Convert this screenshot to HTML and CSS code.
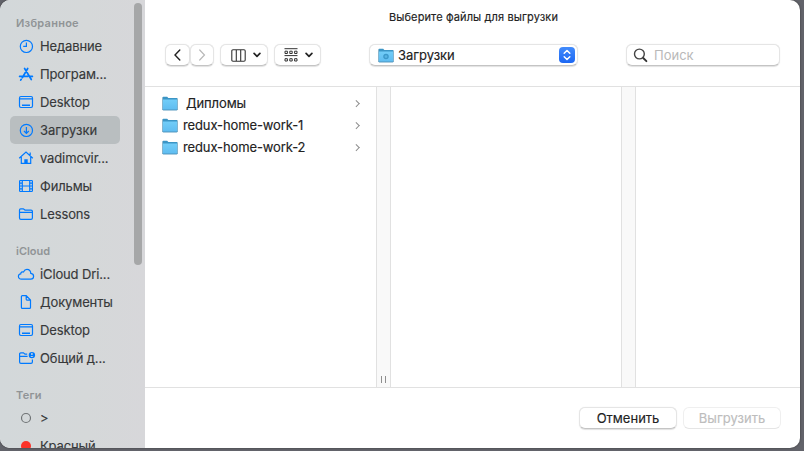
FILE: index.html
```html
<!DOCTYPE html>
<html lang="ru">
<head>
<meta charset="utf-8">
<title>Выберите файлы для выгрузки</title>
<link rel="stylesheet" href="styles.css">
</head>
<body>
<svg class="defs" width="0" height="0">
  <defs>
    <linearGradient id="folder-fill" x1="0" y1="0" x2="0" y2="1"><stop offset="0" stop-color="#72cdf8"/><stop offset="1" stop-color="#5fbcf0"/></linearGradient>
    <symbol id="folder" viewBox="0 0 16 15">
      <path d="M.5 13V1.6Q.5.8 1.3.8h3.9l1.1 1.1h8.4q.8 0 .8.8V13z" fill="#3b95c5"/>
      <path d="M.5 3.6h15v9.6q0 .8-.8.8H1.3q-.8 0-.8-.8z" fill="url(#folder-fill)"/>
      <path d="M.5 13.1q0 .9.8.9h13.4q.8 0 .8-.9" fill="none" stroke="#4a90b8" stroke-width=".9"/>
      <path d="M.4 1.5v12M15.6 2.5v11" stroke="#86aabd" stroke-width=".7"/>
    </symbol>
    <symbol id="desktop" viewBox="0 0 16 16">
      <rect x="1.5" y="2.5" width="13" height="11" rx="1.4"/><path d="M2 4.9h12"/><path d="M4 11.2h8" stroke-width="1.6"/>
    </symbol>
    <symbol id="chev" viewBox="0 0 8 6"><path d="M1.1 1.4 4 4.3l2.9-2.9" fill="none" stroke="#222" stroke-width="1.7" stroke-linecap="round" stroke-linejoin="round"/></symbol>
  </defs>
</svg>
<div class="window">
  <aside class="sidebar">
    <h2>Избранное</h2>
    <ul>
      <li><svg viewBox="0 0 16 16"><circle cx="8.4" cy="8.4" r="6.1"/><path d="M8.4 4.4v4H5.2"/></svg><span>Недавние</span></li>
      <li><svg viewBox="0 0 16 16"><path d="M9.7 2.5 4.3 11.7M6.6 2.5l6.7 11M1.6 10.4h8M12.2 10.4h2.2M3.2 13.4l-.5.6" stroke-width="1.7" stroke-linecap="round"/></svg><span>Програм...</span></li>
      <li><svg><use href="#desktop"/></svg><span>Desktop</span></li>
      <li class="selected"><svg viewBox="0 0 16 16"><circle cx="8.4" cy="8.4" r="6.1"/><path d="M8.4 4.9v6.4M6 9l2.4 2.4L10.8 9"/></svg><span>Загрузки</span></li>
      <li><svg viewBox="0 0 16 16"><path d="M1.2 8.2 8 2l6.8 6.2M3.3 7v6.4h9.4V7M12.2 5V2.6"/><path d="M6.3 13.5V9.2h3.4v4.3z" fill="#007aff" stroke="none"/></svg><span>vadimcvir...</span></li>
      <li><svg viewBox="0 0 16 16"><rect x="1.6" y="2.5" width="12.8" height="11" rx=".8"/><path d="M4.3 2.5v11M11.7 2.5v11M4.3 8h7.4M1.6 5.2h2.7M1.6 8h2.7M1.6 10.8h2.7M11.7 5.2h2.7M11.7 8h2.7M11.7 10.8h2.7"/></svg><span>Фильмы</span></li>
      <li><svg viewBox="0 0 16 16"><path d="M1.5 12V4q0-1.2 1.2-1.2h2.6L7 4.1h6q1.4 0 1.4 1.2V12q0 1.4-1.4 1.4H2.9Q1.5 13.4 1.5 12zM1.6 6.4h12.7"/></svg><span>Lessons</span></li>
    </ul>
    <h2 class="latin">iCloud</h2>
    <ul>
      <li><svg viewBox="0 0 16 16"><path d="M3.4 13.2C1.6 13.2.4 12 .4 10.5c0-1.4 1-2.5 2.3-2.6 0-1.6 1.5-2.5 2.8-1.9.7-1.6 1.8-2.7 3.4-2.7 2.3 0 3.8 1.8 3.9 4.1 1.6.2 2.8 1.4 2.8 2.9 0 1.7-1.2 2.9-2.9 2.9z"/></svg><span>iCloud Dri...</span></li>
      <li><svg viewBox="0 0 16 16"><path d="M3.4 2.6q0-1 1-1h3.8l4.3 4.5v7.3q0 1-1 1H4.4q-1 0-1-1zM8.2 1.6v3.7q0 .8.8.8h3.5"/></svg><span>Документы</span></li>
      <li><svg><use href="#desktop"/></svg><span>Desktop</span></li>
      <li><svg viewBox="0 0 16 16"><path d="M9.2 4.1H7L5.4 2.8H2.8Q1.6 2.8 1.6 4v8q0 1.4 1.3 1.4H13q1.4 0 1.4-1.4V9.5M1.6 6.4h8"/><circle cx="13.9" cy="5.1" r="3.2" fill="#007aff" stroke="none"/><circle cx="13.9" cy="4" r=".9" fill="#d4d8da" stroke="none"/><path d="M12.4 6.9q1.5-1.9 3 0z" fill="#d4d8da" stroke="none"/></svg><span>Общий д...</span></li>
    </ul>
    <h2>Теги</h2>
    <ul>
      <li><svg viewBox="0 0 16 16"><circle class="tag-empty" cx="8" cy="8" r="4.5"/></svg><span>&gt;</span></li>
      <li><svg viewBox="0 0 16 16"><circle class="tag-red" cx="8" cy="8" r="5"/></svg><span>Красный</span></li>
    </ul>
    <div class="scrollbar"></div>
  </aside>
  <main>
    <h1>Выберите файлы для выгрузки</h1>
    <div class="toolbar">
      <button class="nav"><svg width="8" height="12" viewBox="0 0 8 12"><path d="M5.8 1 1 6l4.8 5" fill="none" stroke="#222" stroke-width="1.4" stroke-linecap="round"/></svg></button>
      <button class="nav next"><svg width="8" height="12" viewBox="0 0 8 12"><path d="m1.7 1 4.8 5-4.8 5" fill="none" stroke="#b8b8b8" stroke-width="1.2" stroke-linecap="round"/></svg></button>
      <button class="view"><svg width="15" height="13" viewBox="0 0 15 13"><path d="M2 .8h11q1.2 0 1.2 1.2v9q0 1.2-1.2 1.2H2Q.8 12.2.8 11V2Q.8.8 2 .8zM5.3.8v11.4M9.7.8v11.4" fill="none" stroke="#333" stroke-width="1.1"/></svg><svg width="8" height="6"><use href="#chev"/></svg></button>
      <button class="group"><svg width="14" height="15" viewBox="0 0 14 15" fill="none" stroke="#333"><path d="M.5.7h13M.5 7.6h13"/><path d="M1 3.2h2.4v2.3H1zM5.8 3.2h2.4v2.3H5.8zM10.6 3.2H13v2.3h-2.4zM1 10.7h2.4V13H1zM5.8 10.7h2.4V13H5.8zM10.6 10.7H13V13h-2.4z"/></svg><svg width="8" height="6"><use href="#chev"/></svg></button>
      <div class="location">
        <svg width="16" height="15" viewBox="0 0 16 15"><use href="#folder"/><circle cx="8" cy="8.6" r="2.1" fill="#58b4e3" stroke="#3c98ca" stroke-width="1.3"/></svg>
        <span>Загрузки</span>
        <i class="stepper"><svg width="16" height="16" viewBox="0 0 16 16"><path d="m5.2 6.3 2.8-2.8 2.8 2.8M5.2 9.7 8 12.5l2.8-2.8" fill="none" stroke="#fff" stroke-width="1.5" stroke-linecap="round" stroke-linejoin="round"/></svg></i>
      </div>
      <label class="search"><svg width="15" height="15" viewBox="0 0 15 15"><path d="M10.2 10 13.4 13.2" stroke="#333" stroke-width="1.9" stroke-linecap="round"/><circle cx="6.4" cy="6" r="4.9" fill="none" stroke="#444" stroke-width="1.4"/></svg><span>Поиск</span></label>
    </div>
    <div class="browser">
      <div class="column files">
        <div class="file"><svg><use href="#folder"/></svg><span class="indent">Дипломы</span><b></b></div>
        <div class="file"><svg><use href="#folder"/></svg><span>redux-home-work-1</span><b></b></div>
        <div class="file"><svg><use href="#folder"/></svg><span>redux-home-work-2</span><b></b></div>
      </div>
      <div class="gutter"><i class="grip"></i></div>
      <div class="column"></div>
      <div class="gutter"></div>
      <div class="column"></div>
    </div>
    <footer><button class="cancel">Отменить</button><button class="upload" disabled>Выгрузить</button></footer>
  </main>
</div>
</body>
</html>
```
FILE: styles.css
```css
* { box-sizing: border-box; }
body { margin: 0; width: 804px; height: 451px; overflow: hidden; background: #62636a; font: 13px Inter, "Liberation Sans", sans-serif; color: #222; }
.defs { display: block; height: 0; }
h1, h2, ul { margin: 0; padding: 0; }
svg { display: block; flex: none; }
.window { width: 800px; height: 448px; border-radius: 10px; overflow: hidden; display: grid; grid-template-columns: 145px 1fr; background: #fff; box-shadow: 0 0 2px #333; }

.sidebar { position: relative; overflow: hidden; background: linear-gradient(90deg, #d3d8da, #d5d8d9 60%, #d7d7da); }
.sidebar h2 { height: 32px; padding: 14px 0 0 16px; font-size: 11px; line-height: 18px; font-weight: 600; color: #909496; letter-spacing: .25px; }
.sidebar h2.latin { letter-spacing: 0; }
.sidebar ul { list-style: none; }
.sidebar li { height: 28px; margin-left: 10px; width: 110px; padding-left: 8px; display: flex; align-items: center; gap: 6px; border-radius: 5px; color: #37393a; white-space: nowrap; letter-spacing: -.13px; -webkit-text-stroke: .15px; }
.sidebar li.selected { background: #b9bec0; letter-spacing: 0; }
.sidebar li svg { width: 16px; height: 16px; overflow: visible; fill: none; stroke: #007aff; stroke-width: 1.2; }
.sidebar li .tag-empty { stroke: #707476; }
.sidebar li .tag-red { fill: #fb3329; stroke: none; }
.scrollbar { position: absolute; right: 3px; top: 3px; width: 8px; height: 262px; border-radius: 4px; background: #a6a7a8; }

main { display: grid; grid-template-rows: 34px 52px 302px 60px; min-width: 0; }
h1 { font-size: 11px; line-height: 34px; font-weight: 400; text-align: center; padding-left: 2px; letter-spacing: .12px; -webkit-text-stroke: .15px; }
.toolbar { display: flex; align-items: flex-start; padding: 10px 20px 0; }
button { font: inherit; color: inherit; padding: 0; }
.toolbar button, .location, .search, footer button { height: 22px; border: 1px solid #e5e5e5; border-bottom-color: #c4c4c4; border-radius: 6px; background: #fff; display: flex; align-items: center; box-shadow: 0 .5px 1px rgba(0,0,0,.12); }
.toolbar .nav { width: 25px; justify-content: center; }
.toolbar .next { width: 24px; }
.toolbar .view, .toolbar .group { width: 48px; margin-left: 6px; padding-left: 10px; gap: 7px; }
.toolbar .group { width: 47px; padding-left: 9px; }
.location { width: 209px; margin-left: 48px; padding: 0 2px 0 8px; gap: 4px; letter-spacing: -.05px; -webkit-text-stroke: .15px; }
.stepper { margin-left: auto; width: 16px; height: 16px; border-radius: 4px; background: linear-gradient(#428bfb, #1c67f3); }
.search { width: 154px; margin-left: auto; padding-left: 6px; gap: 6px; color: #b9b9b9; }

.browser { display: grid; grid-template-columns: 231px 15px 230px 15px 1fr; border-top: 1px solid #e1e1e1; border-bottom: 1px solid #e1e1e1; }
.files { padding-top: 5px; }
.file { height: 22px; display: flex; align-items: center; padding: 0 18px 0 17px; letter-spacing: -.12px; -webkit-text-stroke: .15px; }
.file svg { width: 16px; height: 15px; margin-right: 5px; }
.file .indent { padding-left: 3px; }
.file b { margin-left: auto; width: 4.5px; height: 4.5px; border: solid #8c8c8c; border-width: 1px 1px 0 0; transform: rotate(45deg); }
.gutter { background: #f9f9f9; border: solid #e1e1e1; border-width: 0 1px; display: flex; align-items: flex-end; justify-content: center; }
.grip { width: 5px; height: 7px; margin-bottom: 4px; border: solid #8e8e8e; border-width: 0 1px; }
footer { display: flex; justify-content: flex-end; gap: 6px; padding: 19px 19px 0; }
footer button { width: 98px; justify-content: center; -webkit-text-stroke: .15px; }
footer .upload { color: #bdbdbd; border-color: #efefef; border-bottom-color: #e5e5e5; box-shadow: none; }
```
